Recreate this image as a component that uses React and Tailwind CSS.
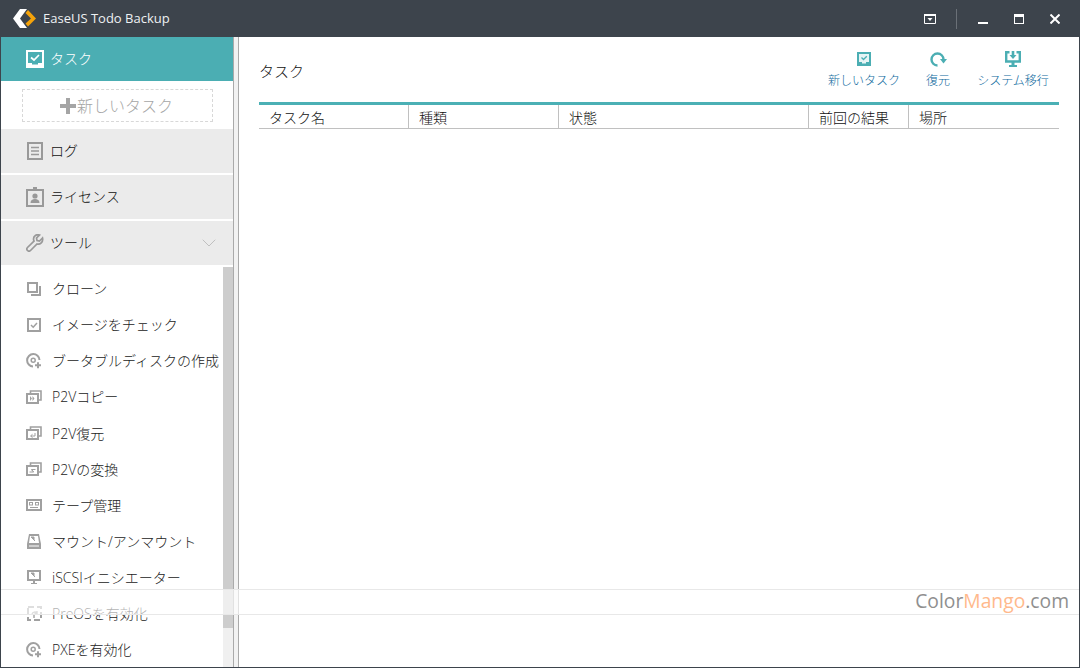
import { ChevronDown } from 'lucide-react'

const JP = "font-['Open_Sans','Noto_Sans_CJK_JP',sans-serif]"

function Logo() {
  return (
    <svg width="23" height="19" viewBox="0 0 23 19" aria-hidden="true">
      <path d="M0 9.500 L7 0 L14 0 L7 9.500 L14 19 L7 19 Z" fill="#fff" />
      <path d="M15 1 L23 9.500 L15 17.500 L12.500 14.500 L18 9.500 L12.500 4 Z" fill="#f5a30a" />
    </svg>
  )
}

function TaskIcon() {
  return (
    <svg width="18" height="18" viewBox="0 0 18 18" aria-hidden="true">
      <path d="M0 0h18v18H0z" fill="#fff" />
      <path d="M2 2h14v11h-4v1.500H6V13H2z" fill="#4baeb3" />
      <path d="M5 7.500 L8 10 L13 5" fill="none" stroke="#fff" strokeWidth="1.700" />
    </svg>
  )
}

function NewTaskIcon() {
  return (
    <svg width="14" height="14" viewBox="0 0 14 14" aria-hidden="true">
      <path d="M0 0h14v14H0z" fill="#4baeb3" />
      <path d="M2 2h10v8H9v1.500H5V10H2z" fill="#e6f4f5" />
      <path d="M4.500 5.500 L6.500 7.500 L9.800 4.200" fill="none" stroke="#4baeb3" strokeWidth="1.300" />
    </svg>
  )
}

function LogIcon() {
  return (
    <svg width="16" height="18" viewBox="0 0 16 18" aria-hidden="true">
      <rect x="1" y="1" width="14" height="16" fill="none" stroke="#999" strokeWidth="2" />
      <path d="M4 5.500h8M4 9h8M4 12.500h8" stroke="#999" strokeWidth="1.500" />
    </svg>
  )
}

function LicenseIcon() {
  return (
    <svg width="18" height="20" viewBox="0 0 18 20" aria-hidden="true">
      <path d="M7 0h4v3H7z" fill="#999" />
      <rect x="1" y="3" width="16" height="16" fill="none" stroke="#999" strokeWidth="2" />
      <circle cx="9" cy="9" r="2.600" fill="#999" />
      <path d="M4.500 16c0-3 2-4 4.500-4s4.500 1 4.500 4z" fill="#999" />
    </svg>
  )
}

function WrenchIcon() {
  return (
    <svg width="18" height="18" viewBox="0 0 18 18" aria-hidden="true">
      <path d="M16.500 4 L13.500 7 L11 6.500 L10.500 4 L13.500 1 C10.500 0 7.500 2 7.500 5 C7.500 6 7.700 6.500 8 7 L1.500 13.500 C0.500 14.500 0.500 15.500 1.500 16.500 C2.500 17.500 3.500 17.500 4.500 16.500 L11 10 C14 11 17.500 8 16.500 4 Z" fill="none" stroke="#999" strokeWidth="1.700" />
    </svg>
  )
}

function P2vFrame({ children }) {
  return (
    <svg width="16" height="14" viewBox="0 0 16 14" aria-hidden="true">
      <path d="M4.500 3V1h10.500v9h-2" fill="none" stroke="#a0a0a0" strokeWidth="1.600" />
      <rect x="1" y="4" width="11" height="9" fill="#fff" stroke="#a0a0a0" strokeWidth="2" />
      {children}
    </svg>
  )
}

function ToolIcon({ kind }) {
  const c = '#a0a0a0'
  if (kind === 'clone') {
    return (
      <svg width="14" height="14" viewBox="0 0 14 14" aria-hidden="true">
        <rect x="1" y="1" width="9" height="9" fill="none" stroke={c} strokeWidth="2" />
        <path d="M13 4v9H4" fill="none" stroke={c} strokeWidth="2" />
      </svg>
    )
  }
  if (kind === 'check') {
    return (
      <svg width="14" height="14" viewBox="0 0 14 14" aria-hidden="true">
        <rect x="1" y="1" width="12" height="12" fill="none" stroke={c} strokeWidth="2" />
        <path d="M4 7l2.200 2.200L10 5" fill="none" stroke={c} strokeWidth="1.500" />
      </svg>
    )
  }
  if (kind === 'disc') {
    return (
      <svg width="16" height="16" viewBox="0 0 16 16" aria-hidden="true">
        <path d="M13.500 7A6.200 6.200 0 1 0 7 13.500" fill="none" stroke={c} strokeWidth="2" />
        <circle cx="7.200" cy="7.200" r="2" fill="none" stroke={c} strokeWidth="1.500" />
        <path d="M9 12.200h6M12 9.200v6" stroke={c} strokeWidth="2" />
      </svg>
    )
  }
  if (kind === 'p2v-copy') {
    return <P2vFrame><path d="M4 6v5l2-2.500zM6.500 6v5l2-2.500z" fill={c} /></P2vFrame>
  }
  if (kind === 'p2v-restore') {
    return <P2vFrame><path d="M9 7v3H5M6.500 8.300 L4.500 10 L6.500 11.500" fill="none" stroke={c} /></P2vFrame>
  }
  if (kind === 'p2v-convert') {
    return <P2vFrame><path d="M3.500 10h4M6 8.500l2 1.500M9.500 7.500h-4M7 9l-2-1.500" fill="none" stroke={c} /></P2vFrame>
  }
  if (kind === 'tape') {
    return (
      <svg width="16" height="12" viewBox="0 0 16 12" aria-hidden="true">
        <rect x="1" y="1" width="14" height="10" fill="#fff" stroke={c} strokeWidth="2" />
        <rect x="3.500" y="3.500" width="3" height="2.500" fill="none" stroke={c} />
        <rect x="9.500" y="3.500" width="3" height="2.500" fill="none" stroke={c} />
        <path d="M4 8.500h8" stroke={c} />
      </svg>
    )
  }
  if (kind === 'mount') {
    return (
      <svg width="14" height="15" viewBox="0 0 14 15" aria-hidden="true">
        <path d="M2 0h10l2 10v5H0v-5z" fill={c} />
        <path d="M3 2h8l1 7H2z" fill="#fff" />
        <path d="M4 3h3v3zM5 4l3 3" fill={c} stroke={c} />
        <path d="M2 12h10" stroke="#fff" />
      </svg>
    )
  }
  if (kind === 'iscsi') {
    return (
      <svg width="14" height="14" viewBox="0 0 14 14" aria-hidden="true">
        <rect x="1" y="1" width="12" height="9" fill="#fff" stroke={c} strokeWidth="2" />
        <path d="M4 3h3v3zM5 4l3 3" fill={c} stroke={c} />
        <path d="M6 11h2v2h2v1H4v-1h2z" fill={c} />
      </svg>
    )
  }
  if (kind === 'preos') {
    return (
      <svg width="15" height="15" viewBox="0 0 15 15" aria-hidden="true">
        <rect x="1" y="1" width="13" height="13" fill="none" stroke={c} strokeWidth="2" strokeDasharray="6 3" />
        <path d="M5 8a3 3 0 0 1 5-1M10 5v2.500H7.500M7 12V9" fill="none" stroke={c} strokeWidth="1.400" />
      </svg>
    )
  }
  return null
}

function RestoreIcon() {
  return (
    <svg width="17" height="15" viewBox="0 0 17 15" aria-hidden="true">
      <path d="M7.500 13.500A6 6 0 1 1 13.500 7.500" fill="none" stroke="#4baeb3" strokeWidth="2.400" />
      <path d="M10 7h7L13.500 11.500z" fill="#4baeb3" />
    </svg>
  )
}

function MigrateIcon() {
  return (
    <svg width="16" height="16" viewBox="0 0 16 16" aria-hidden="true">
      <path d="M4.500 1.200H1.200v9.300h13.600V1.200h-3.300" fill="none" stroke="#4baeb3" strokeWidth="2.400" />
      <path d="M6.700 0h2.600v4h2.200L8 8 4.500 4h2.200z" fill="#4baeb3" />
      <path d="M6.500 11h3v3h2.500v2H4v-2h2.500z" fill="#4baeb3" />
    </svg>
  )
}

const tools = [
  { kind: 'clone', label: 'クローン' },
  { kind: 'check', label: 'イメージをチェック' },
  { kind: 'disc', label: 'ブータブルディスクの作成' },
  { kind: 'p2v-copy', label: 'P2Vコピー' },
  { kind: 'p2v-restore', label: 'P2V復元' },
  { kind: 'p2v-convert', label: 'P2Vの変換' },
  { kind: 'tape', label: 'テープ管理' },
  { kind: 'mount', label: 'マウント/アンマウント' },
  { kind: 'iscsi', label: 'iSCSIイニシエーター' },
  { kind: 'preos', label: 'PreOSを有効化' },
  { kind: 'disc', label: 'PXEを有効化' },
]

const columns = [
  { label: 'タスク名', w: 'w-[150px]' },
  { label: '種類', w: 'w-[150px]' },
  { label: '状態', w: 'w-[250px]' },
  { label: '前回の結果', w: 'w-[100px]' },
  { label: '場所', w: 'flex-1' },
]

function NavRow({ icon, label, children }) {
  return (
    <div className="h-[44px] bg-[#ebebeb] flex items-center pl-[25px] text-[14px] font-light text-[#111]">
      <span className="w-[18px] mr-[6px] flex justify-center">{icon}</span>
      <span className="-mt-[1px]">{label}</span>
      {children}
    </div>
  )
}

export default function App() {
  return (
    <div className={`relative w-[1080px] h-[668px] overflow-hidden flex flex-col bg-white border-x border-b border-[#3d444c] ${JP}`}>
      {/* title bar */}
      <div className="h-[37px] -mx-px shrink-0 bg-[#3d444c] flex items-center pl-[13px] text-white">
        <Logo />
        <span className="ml-[7px] text-[13px] text-[#eef1f3]">EaseUS Todo Backup</span>
        <div className="ml-auto flex items-center">
          <svg width="12" height="10" viewBox="0 0 12 10" aria-hidden="true">
            <path d="M0.500 0.500h11v9h-11z" fill="none" stroke="#fff" />
            <path d="M0 0h12v2H0zM3.500 4h5L6 7z" fill="#fff" />
          </svg>
          <div className="w-px h-[20px] bg-[#6a7077] ml-[20px]" />
          <div className="w-[10px] h-[2px] bg-white ml-[21px] mt-[8px]" />
          <div className="w-[10px] h-[10px] border border-t-[3px] border-white ml-[26px]" />
          <svg className="ml-[26px] mr-[20px]" width="10" height="10" viewBox="0 0 10 10" aria-hidden="true">
            <path d="M0.500 0.500l9 9M9.500 0.500l-9 9" stroke="#fff" strokeWidth="2" />
          </svg>
        </div>
      </div>

      <div className="flex flex-1 min-h-0">
        {/* sidebar */}
        <div className="w-[232px] shrink-0 flex flex-col overflow-hidden">
          <div className="h-[44px] shrink-0 bg-[#4baeb3] flex items-center pl-[25px] text-white text-[14px] font-light">
            <TaskIcon />
            <span className="ml-[6px] -mt-[1px]">タスク</span>
          </div>
          <div className="h-[48px] shrink-0 pt-[8px] pl-[21px]">
            <div className="w-[191px] h-[33px] border border-dashed border-[#d8d8d8] flex items-center justify-center pt-[1px] pr-[3px] text-[16px] font-light text-[#a5a5a5]">
              <svg width="18" height="18" viewBox="0 0 18 18" aria-hidden="true">
                <path d="M7 1h4v6h6v4h-6v6H7v-6H1V7h6z" fill="#a5a5a5" />
              </svg>
              <span>新しいタスク</span>
            </div>
          </div>
          <div className="flex flex-col gap-[2px] shrink-0">
            <NavRow icon={<LogIcon />} label="ログ" />
            <NavRow icon={<LicenseIcon />} label="ライセンス" />
            <NavRow icon={<WrenchIcon />} label="ツール">
              <ChevronDown className="ml-auto mr-[12px] text-[#b5b5b5]" size={24} strokeWidth={0.8} />
            </NavRow>
          </div>
          <div className="relative flex-1 min-h-0">
            <div className="absolute right-0 top-[2px] bottom-0 w-[10px] bg-[#f0f0f0]">
              <div className="h-[361px] bg-[#cdcdcd]" />
            </div>
            <div className="flex flex-col pt-[5.6px]">
              {tools.map((t, i) => (
                <div key={i} className="h-[36.1px] shrink-0 flex items-center pl-[25px] text-[14px] font-light text-[#222] whitespace-nowrap">
                  <span className="w-[16px] mr-[10px] flex justify-center"><ToolIcon kind={t.kind} /></span>
                  <span>{t.label}</span>
                </div>
              ))}
            </div>
          </div>
        </div>

        <div className="w-[6px] shrink-0 bg-[#f2f2f2] border-x border-[#aaaaaa]" />

        {/* main */}
        <div className="flex-1 pl-[20px] pr-[20px]">
          <div className="h-[65px] flex items-start">
            <span className="mt-[23px] text-[15px] font-light text-[#111]">タスク</span>
            <div className="ml-auto flex text-[12px] font-light text-[#0b689c] pt-[15px]">
              <div className="w-[72px] flex flex-col items-center">
                <div className="h-[16px]"><NewTaskIcon /></div>
                <span className="mt-[4px]">新しいタスク</span>
              </div>
              <div className="w-[76px] flex flex-col items-center">
                <div className="h-[16px]"><RestoreIcon /></div>
                <span className="mt-[4px]">復元</span>
              </div>
              <div className="w-[74px] mr-[9px] flex flex-col items-center">
                <div className="h-[16px] -mt-[1px]"><MigrateIcon /></div>
                <span className="mt-[5px]">システム移行</span>
              </div>
            </div>
          </div>
          <div className="h-[27px] border-t-[3px] border-[#4bb0b5] border-b border-b-[#c0c0c0] flex text-[14px] font-light text-[#111]">
            {columns.map((c, i) => (
              <div key={i} className={`${c.w} pl-[10px] pt-[1px] flex items-center ${i < columns.length - 1 ? 'border-r border-[#c0c0c0]' : ''}`}>
                {c.label}
              </div>
            ))}
          </div>
        </div>
      </div>

      {/* watermark strip over the window */}
      <div className="absolute -left-px right-[-1px] top-[589px] h-[26px] bg-white/65 border-y border-[#e8e8e8] flex items-center justify-end pr-[11px] pb-[1px] text-[19.3px]">
        <span className="text-[#8f8f8f]">Color</span>
        <span className="text-[#ffb98c]">Mango</span>
        <span className="text-[#8f8f8f]">.com</span>
      </div>
    </div>
  )
}
